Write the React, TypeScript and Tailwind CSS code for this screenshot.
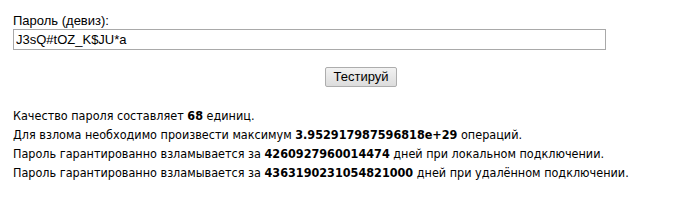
export default function App() {
  return (
    <div className="bg-white px-[13px] pt-[13px] text-black" style={{ width: 673, height: 205 }}>
      <div className="font-['Liberation_Sans',Arial,sans-serif] text-[13px] leading-[15px]">Пароль (девиз):</div>
      <input
        readOnly
        value="J3sQ#tOZ_K$JU*a"
        className="mt-[1px] block h-[21px] w-[593px] border border-[#a9a9a9] px-[2px] font-['Liberation_Sans',Arial,sans-serif] text-[13px] text-black outline-none"
      />
      <div className="mt-[17px] flex pl-[312px]">
        <button
          type="button"
          className="h-[20px] w-[72px] rounded-[2px] border border-[#adadad] bg-gradient-to-b from-[#f2f2f2] to-[#dcdcdc] font-['Liberation_Sans',Arial,sans-serif] text-[13px] leading-[18px]"
        >
          Тестируй
        </button>
      </div>
      <div className="mt-[19px] font-['DejaVu_Sans_Condensed','Open_Sans',sans-serif] text-[12.5px] leading-[19px]">
        <p>
          Качество пароля составляет <b>68</b> единиц.
        </p>
        <p>
          Для взлома необходимо произвести максимум <b>3.952917987596818e+29</b> операций.
        </p>
        <p>
          Пароль гарантированно взламывается за <b>4260927960014474</b> дней при локальном подключении.
        </p>
        <p>
          Пароль гарантированно взламывается за <b>4363190231054821000</b> дней при удалённом подключении.
        </p>
      </div>
    </div>
  )
}
